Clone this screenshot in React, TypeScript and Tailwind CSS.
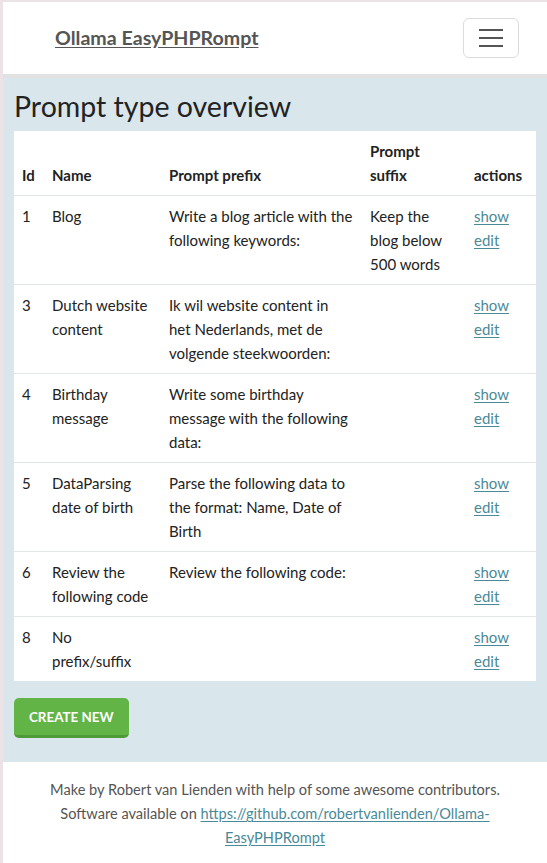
import React from 'react';

type PromptType = {
  id: number;
  name: string;
  prefix: string;
  suffix: string;
};

const promptTypes: PromptType[] = [
  { id: 1, name: 'Blog', prefix: 'Write a blog article with the following keywords:', suffix: 'Keep the blog below 500 words' },
  { id: 3, name: 'Dutch website content', prefix: 'Ik wil website content in het\u00a0Nederlands, met de volgende steekwoorden:', suffix: '' },
  { id: 4, name: 'Birthday message', prefix: 'Write some birthday message with the following data:', suffix: '' },
  { id: 5, name: 'DataParsing date of birth', prefix: 'Parse the following data to the format: Name, Date of Birth', suffix: '' },
  { id: 6, name: 'Review the following code', prefix: 'Review the following code:', suffix: '' },
  { id: 8, name: 'No prefix/suffix', prefix: '', suffix: '' },
];

const linkClass = 'text-[#4a8a98] underline underline-offset-2';

const App: React.FC = () => {
  return (
    <div className="min-h-[863px] flex flex-col border-l-[3px] border-t-[2px] border-[#ebe3e5] font-['Lato',sans-serif] text-[15px] leading-6 text-[#222]">
      {/* Navbar */}
      <header className="h-[72px] bg-white flex items-center justify-between pl-[52px] pr-[28px] shadow-[0_4px_0_#e2e2e2] relative z-10">
        <a href="#" className="text-[19.6px] font-bold text-[#555] underline underline-offset-2">
          Ollama EasyPHPRompt
        </a>
        <button className="w-[56px] h-[40px] border border-[#dcdcdc] rounded-[6px] flex flex-col items-center justify-center gap-[6px]">
          <span className="block w-[24px] h-[2px] bg-[#555]" />
          <span className="block w-[24px] h-[2px] bg-[#555]" />
          <span className="block w-[24px] h-[2px] bg-[#555]" />
        </button>
      </header>

      {/* Main */}
      <main className="bg-[#d9e6eb] pt-[14px] pb-[24px] px-[11px]">
        <h1 className="text-[28.5px] leading-9 text-[#222] mb-[7px]">Prompt type overview</h1>
        <table className="w-[522px] table-fixed bg-white border-collapse">
          <colgroup>
            <col className="w-[30px]" />
            <col className="w-[117px]" />
            <col className="w-[201px]" />
            <col className="w-[104px]" />
            <col className="w-[70px]" />
          </colgroup>
          <thead>
            <tr className="border-b border-[#e3e6e8]">
              <th className="p-2 text-left align-bottom font-bold">Id</th>
              <th className="p-2 text-left align-bottom font-bold">Name</th>
              <th className="p-2 text-left align-bottom font-bold">Prompt prefix</th>
              <th className="p-2 text-left align-bottom font-bold">Prompt suffix</th>
              <th className="p-2 text-left align-bottom font-bold">actions</th>
            </tr>
          </thead>
          <tbody>
            {promptTypes.map((p, i) => (
              <tr key={p.id} className={i < promptTypes.length - 1 ? 'border-b border-[#e3e6e8]' : ''}>
                <td className="p-2 align-top">{p.id}</td>
                <td className="p-2 align-top">{p.name}</td>
                <td className="p-2 align-top">{p.prefix}</td>
                <td className="p-2 align-top">{p.suffix}</td>
                <td className="p-2 align-top">
                  <a href="#" className={linkClass + ' block w-fit'}>show</a>
                  <a href="#" className={linkClass + ' block w-fit'}>edit</a>
                </td>
              </tr>
            ))}
          </tbody>
        </table>
        <button className="mt-[17px] h-[40px] px-[15px] bg-[#62b446] border-b-[3px] border-[#4e9a37] rounded-[5px] text-white font-bold text-[13.4px] uppercase">
          Create new
        </button>
      </main>

      {/* Footer */}
      <footer className="flex-1 bg-white text-center text-[#555] text-[14.6px] pt-[16px] px-[30px]">
        Make by Robert van Lienden with help of some awesome contributors.
        <br />
        Software available on{' '}
        <a href="#" className={linkClass}>
          https://github.com/robertvanlienden/Ollama-EasyPHPRompt
        </a>
      </footer>
    </div>
  );
};

export default App;
